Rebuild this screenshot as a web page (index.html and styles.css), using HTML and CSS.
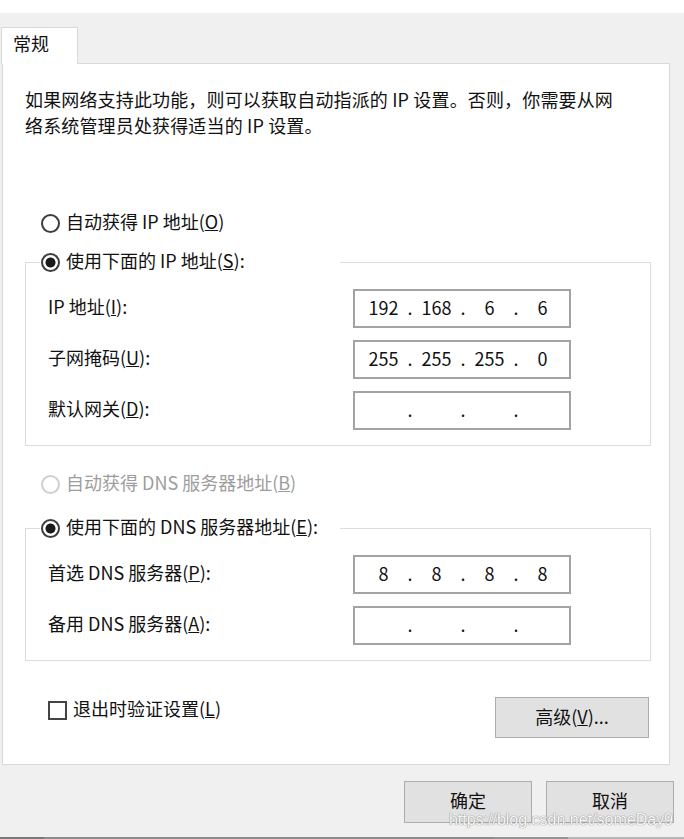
FILE: index.html
```html
<!DOCTYPE html>
<html lang="zh-CN">
<head>
<meta charset="utf-8">
<title>IPv4 属性</title>
<link rel="stylesheet" href="styles.css">
</head>
<body>
<div class="window">
  <div class="top-band"></div>
  <div class="tabs"><div class="tab">常规</div></div>
  <div class="panel">
    <p class="intro">如果网络支持此功能，则可以获取自动指派的 IP 设置。否则，你需要从网<br>络系统管理员处获得适当的 IP 设置。</p>

    <label class="radio-row first-radio"><input class="radio" type="radio" name="ip"><span>自动获得 IP 地址(<u>O</u>)</span></label>

    <fieldset class="group">
      <legend class="group-legend"><label class="radio-row"><input class="radio" type="radio" name="ip" checked><span>使用下面的 IP 地址(<u>S</u>):</span></label></legend>
      <div class="field-grid">
        <span class="field-label">IP 地址(<u>I</u>):</span>
        <div class="ip"><span class="oct">192</span><span class="dot">.</span><span class="oct">168</span><span class="dot">.</span><span class="oct">6</span><span class="dot">.</span><span class="oct">6</span></div>
        <span class="field-label">子网掩码(<u>U</u>):</span>
        <div class="ip"><span class="oct">255</span><span class="dot">.</span><span class="oct">255</span><span class="dot">.</span><span class="oct">255</span><span class="dot">.</span><span class="oct">0</span></div>
        <span class="field-label">默认网关(<u>D</u>):</span>
        <div class="ip"><span class="oct"></span><span class="dot">.</span><span class="oct"></span><span class="dot">.</span><span class="oct"></span><span class="dot">.</span><span class="oct"></span></div>
      </div>
    </fieldset>

    <label class="radio-row disabled dns-auto"><input class="radio" type="radio" name="dns" disabled><span>自动获得 DNS 服务器地址(<u>B</u>)</span></label>

    <fieldset class="group group-dns">
      <legend class="group-legend"><label class="radio-row"><input class="radio" type="radio" name="dns" checked><span>使用下面的 DNS 服务器地址(<u>E</u>):</span></label></legend>
      <div class="field-grid">
        <span class="field-label">首选 DNS 服务器(<u>P</u>):</span>
        <div class="ip"><span class="oct">8</span><span class="dot">.</span><span class="oct">8</span><span class="dot">.</span><span class="oct">8</span><span class="dot">.</span><span class="oct">8</span></div>
        <span class="field-label">备用 DNS 服务器(<u>A</u>):</span>
        <div class="ip"><span class="oct"></span><span class="dot">.</span><span class="oct"></span><span class="dot">.</span><span class="oct"></span><span class="dot">.</span><span class="oct"></span></div>
      </div>
    </fieldset>

    <div class="bottom-row">
      <label class="check-row"><input class="check" type="checkbox"><span>退出时验证设置(<u>L</u>)</span></label>
      <button class="btn btn-adv" type="button">高级(<u>V</u>)...</button>
    </div>
  </div>

  <div class="footer">
    <button class="btn btn-foot" type="button">确定</button>
    <button class="btn btn-foot" type="button">取消</button>
  </div>
  <div class="bottom-bar"></div>
  <div class="watermark">https://blog.csdn.net/someDay9</div>
</div>
</body>
</html>
```

FILE: styles.css
```css
* { box-sizing: border-box; }

html, body {
  margin: 0;
  padding: 0;
  background: #f0f0f0;
}

body {
  font-family: "Noto Sans CJK SC", "Microsoft YaHei", sans-serif;
  font-size: 18px;
  color: #111;
}

.window {
  position: relative;
  width: 684px;
  height: 839px;
  overflow: hidden;
  background: #f0f0f0;
}

.top-band {
  height: 13px;
  background: #ffffff;
}

.tabs {
  padding-top: 14px;
  display: flex;
}

.tab {
  position: relative;
  z-index: 1;
  margin-left: 1px;
  margin-bottom: -1px;
  width: 77px;
  height: 37px;
  border: 1px solid #d9d9d9;
  border-bottom: none;
  background: #fff;
  padding-left: 11px;
  line-height: 30px;
}

.panel {
  margin-left: 2px;
  width: 668px;
  background: #fff;
  border: 1px solid #d9d9d9;
  padding: 0 18px 26px 22px;
}

.intro {
  margin: 22px 0 0 0;
  line-height: 26px;
  white-space: nowrap;
  letter-spacing: 0.15px;
}

.radio-row {
  display: flex;
  align-items: center;
  height: 28px;
  gap: 6px;
  white-space: nowrap;
}

.radio-row span,
.check-row span {
  padding-bottom: 4px;
}

.first-radio {
  margin-top: 71px;
  padding-left: 16px;
}

.radio {
  appearance: none;
  -webkit-appearance: none;
  margin: 0;
  width: 19px;
  height: 19px;
  border-radius: 50%;
  border: 2px solid #3d3d3d;
  background: #fff;
  flex: none;
}

.radio:checked {
  background: radial-gradient(circle, #1b1b1b 0 4.6px, #fff 5.4px);
}

.disabled {
  color: #9d9d9d;
}

.disabled .radio {
  border-color: #cfcfcf;
}

.group {
  margin: 11px 0 0 0;
  padding: 0;
  border: 1px solid #dcdcdc;
  min-width: 0;
  width: 626px;
}

.group-legend {
  padding: 0;
  margin-left: 14px;
  width: 300px;
}

.group-legend .radio-row {
  padding-left: 1px;
}

.field-grid {
  display: grid;
  grid-template-columns: 305px 218px;
  row-gap: 12px;
  align-items: center;
  padding: 13px 79px 15px 22px;
}

.field-label {
  white-space: nowrap;
  padding-bottom: 6px;
}

.ip {
  height: 39px;
  border: 2px solid #a3a3a3;
  background: #fff;
  display: flex;
  align-items: center;
  padding-left: 8px;
  padding-bottom: 4px;
  line-height: 24px;
}

.oct {
  width: 41px;
  text-align: center;
}

.dot {
  width: 12px;
  text-align: center;
}

.dns-auto {
  margin-top: 24px;
  padding-left: 16px;
}

.group-dns {
  margin-top: 16px;
}

.bottom-row {
  display: flex;
  justify-content: space-between;
  align-items: flex-start;
  margin-top: 36px;
  width: 626px;
  padding-left: 23px;
  padding-right: 2px;
}

.check-row {
  display: flex;
  align-items: center;
  gap: 6px;
  height: 26px;
}

.check {
  appearance: none;
  -webkit-appearance: none;
  margin: 0;
  width: 19px;
  height: 19px;
  border: 2px solid #444;
  background: #fff;
  flex: none;
}

.btn {
  font-family: inherit;
  font-size: 18px;
  color: #111;
  background: #e1e1e1;
  border: 1px solid #adadad;
  padding: 0 0 4px 0;
  margin: 0;
  line-height: 18px;
}

.btn-adv {
  width: 154px;
  height: 41px;
}

.footer {
  display: flex;
  justify-content: flex-end;
  gap: 14px;
  margin-top: 16px;
  padding-right: 10px;
}

.btn-foot {
  width: 128px;
  height: 42px;
}

.bottom-bar {
  margin-top: 14px;
  height: 3px;
  background: linear-gradient(to right, #7a7a7a 0, #7a7a7a 44px, #8c8c8c 44px, #8c8c8c 493px, #949494 493px, #949494 568px, #b5b5b5 568px);
}

.watermark {
  position: absolute;
  right: 11px;
  top: 812px;
  font-family: "Liberation Sans", Arial, sans-serif;
  font-size: 16px;
  line-height: 16px;
  color: rgba(255, 255, 255, 0.95);
  text-shadow: 0 0 1px #8a8a8a, 0 0 1px #8a8a8a;
  white-space: nowrap;
}
```
